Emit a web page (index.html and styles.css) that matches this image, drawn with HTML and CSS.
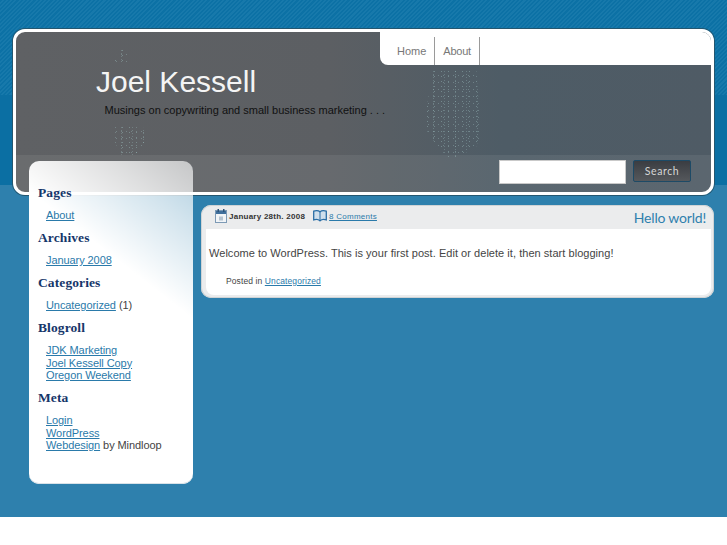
FILE: index.html
```html
<!DOCTYPE html>
<html lang="en">
<head>
<meta charset="utf-8">
<title>Joel Kessell</title>
<link rel="stylesheet" href="styles.css">
</head>
<body>
<div class="page">
  <header class="masthead">
    <div class="masthead-main">
      <nav class="tabs">
        <a href="#">Home</a>
        <a href="#">About</a>
      </nav>
      <h1 class="site-title">Joel Kessell</h1>
      <p class="tagline">Musings on copywriting and small business marketing . . .</p>
      <div class="speckle speckle-right" aria-hidden="true"></div>
      <div class="speckle speckle-top" aria-hidden="true"></div>
      <div class="speckle speckle-low" aria-hidden="true"></div>
    </div>
    <form class="search">
      <input class="search-input" type="text">
      <button class="search-btn" type="button">Search</button>
    </form>
  </header>
  <div class="columns">
    <aside class="sidebar">
      <h2>Pages</h2>
      <ul><li><a href="#">About</a></li></ul>
      <h2>Archives</h2>
      <ul><li><a href="#">January 2008</a></li></ul>
      <h2>Categories</h2>
      <ul><li><a href="#">Uncategorized</a> (1)</li></ul>
      <h2>Blogroll</h2>
      <ul>
        <li><a href="#">JDK Marketing</a></li>
        <li><a href="#">Joel Kessell Copy</a></li>
        <li><a href="#">Oregon Weekend</a></li>
      </ul>
      <h2>Meta</h2>
      <ul>
        <li><a href="#">Login</a></li>
        <li><a href="#">WordPress</a></li>
        <li><a href="#">Webdesign</a> by Mindloop</li>
      </ul>
    </aside>
    <main class="post">
      <div class="post-head">
        <svg class="icon" viewBox="0 0 13 14" width="13" height="14"><rect x="0.5" y="1.500" width="11" height="12" fill="#f1f4f7" stroke="#7d9ab5"/><rect x="1" y="2" width="10" height="3" fill="#3f6f9c"/><rect x="2.500" y="0" width="1.500" height="3" fill="#2b5279"/><rect x="8" y="0" width="1.500" height="3" fill="#2b5279"/><rect x="4" y="7.500" width="4" height="4" fill="#b4c3d1"/></svg>
        <span class="post-date">January 28th. 2008</span>
        <svg class="icon book" viewBox="0 0 14 12" width="14" height="12"><path d="M0.700 1.200C3 .4 5.500 .6 7 1.800c1.500-1.200 4-1.400 6.300-.6v8.600C11 9 8.500 9.300 7 10.800 5.500 9.300 3 9 .7 9.800z" fill="#cfdfec" stroke="#2a6ea6" stroke-width="1.300"/><path d="M7 2v8.500" stroke="#2a6ea6"/></svg>
        <a class="post-comments" href="#">8 Comments</a>
        <h2 class="post-title">Hello world!</h2>
      </div>
      <div class="post-body">
        <p>Welcome to WordPress. This is your first post. Edit or delete it, then start blogging!</p>
        <p class="post-cat">Posted in <a href="#">Uncategorized</a></p>
      </div>
    </main>
  </div>
</div>
</body>
</html>
```
FILE: styles.css
```css
* { box-sizing: border-box; }
html, body { margin: 0; padding: 0; background: #fff; }
body { font-family: "Liberation Sans", Arial, sans-serif; font-size: 11px; color: #444; }

.page {
  height: 517px;
  padding: 29px 13px 0;
  background-color: #2e80ad;
  background-image:
    repeating-linear-gradient(135deg, #0c71a5 0 1.500px, #1779ab 1.500px 3px),
    linear-gradient(#0b6fa3, #0b6fa3);
  background-size: 100% 95px, 100% 185px;
  background-repeat: no-repeat;
}

.masthead {
  position: relative;
  height: 166px;
  border: 3px solid #fff;
  border-radius: 12px;
  background: linear-gradient(90deg, #5f6164 0, #5c5f63 45%, #4e5c66 70%, #4f5b65 100%);
  box-shadow: 0 0 0 1px #24566f;
  overflow: hidden;
}

.masthead-main { position: relative; height: 123px; }

.tabs {
  float: right;
  display: flex;
  width: 331px;
  height: 33px;
  padding: 5px 0 0 7px;
  background: #fff;
  border-bottom-left-radius: 8px;
}
.tabs a {
  display: block;
  height: 28px;
  padding: 8px 8px 0 8px;
  border-right: 1px solid #9a9a9a;
  font-size: 11px;
  line-height: 13px;
  color: #777;
  text-decoration: none;
}
.tabs a:first-child { padding-left: 10px; }
.tabs a:last-child { letter-spacing: -.25px; }

.site-title {
  margin: 0;
  padding: 31px 0 0 80px;
  font-size: 30px;
  line-height: 37px;
  font-weight: normal;
  color: #f4f4f4;
}
.tagline {
  margin: 0;
  padding: 3px 0 0 88.500px;
  font-size: 11px;
  line-height: 14px;
  color: #111;
}

.speckle {
  position: absolute;
  background-image:
    radial-gradient(circle, rgba(160,195,195,.42) 0 .55px, transparent .9px),
    radial-gradient(circle, rgba(160,195,195,.36) 0 .55px, transparent .9px),
    radial-gradient(circle, rgba(160,195,195,.3) 0 .55px, transparent .9px);
  background-size: 7px 5px, 5px 7px, 11px 3px;
  background-position: 0 0, 2px 3px, 4px 1px;
}
.speckle-right {
  left: 408px;
  top: 37px;
  width: 58px;
  height: 88px;
  clip-path: polygon(12% 0, 90% 0, 95% 45%, 100% 70%, 90% 88%, 60% 100%, 40% 100%, 20% 85%, 0 65%, 8% 30%);
}
.speckle-top {
  left: 96px;
  top: 16px;
  width: 16px;
  height: 14px;
  clip-path: polygon(60% 0, 100% 0, 100% 100%, 0 100%);
}
.speckle-low {
  left: 96px;
  top: 93px;
  width: 32px;
  height: 30px;
  clip-path: polygon(10% 0, 100% 10%, 100% 60%, 80% 100%, 30% 100%, 10% 60%);
}

.search {
  display: flex;
  align-items: center;
  height: 37px;
  padding: 0 20px 3px 483px;
  background: rgba(255,255,255,.07);
}
.search-input {
  width: 127px;
  height: 24px;
  padding: 0;
  border: 1px solid #c9c9c9;
  background: #fff;
}
.search-btn {
  width: 58px;
  height: 22px;
  margin: -2px 0 0 7px;
  padding: 0 0 1px;
  border: 1px solid #1d4a66;
  border-radius: 2px;
  background: linear-gradient(#3a3d42, #55585c);
  font-family: "Lato", sans-serif;
  font-size: 10.500px;
  letter-spacing: .6px;
  color: #d6d6d6;
}

.columns {
  display: flex;
  align-items: flex-start;
  gap: 8px;
  padding-left: 16px;
}

.sidebar {
  width: 164px;
  height: 323px;
  margin-top: -34px;
  padding: 23px 0 0 9px;
  position: relative;
  border-radius: 10px;
  background: linear-gradient(218deg, rgba(255,255,255,.62) 0, rgba(255,255,255,.78) 14%, #fff 35%);
  box-shadow: inset 0 -1px 0 #d9e2e8;
}
.sidebar h2 {
  margin: 0;
  font-family: "Liberation Serif", "Times New Roman", serif;
  font-size: 13.500px;
  line-height: 17px;
  font-weight: bold;
  letter-spacing: .1px;
  color: #16366a;
}
.sidebar ul {
  list-style: none;
  margin: 0;
  padding: 8px 0 7.500px 8px;
}
.sidebar li { line-height: 12.500px; font-size: 11px; letter-spacing: -.08px; }
.sidebar a, .post a { color: #2a7aaa; }

.post {
  width: 513px;
  height: 93px;
  margin-top: 10px;
  padding: 3px;
  border-radius: 10px;
  background: #ebeced;
  box-shadow: inset 0 0 0 1px #cfd3d5;
}
.post-head {
  display: flex;
  align-items: center;
  height: 21px;
  padding: 0 5px 0 11px;
  font-size: 8px;
}
.icon { flex: none; margin-top: -5px; }
.post-date {
  margin: -5px 0 0 1px;
  font-weight: bold;
  letter-spacing: .25px;
  color: #333;
}
.book { margin-left: 8px; }
.post-comments { margin: -5px 0 0 2px; letter-spacing: .25px; }
.post-title {
  margin: -2px 0 0 auto;
  font-family: "Lato", sans-serif;
  font-size: 14px;
  line-height: 21px;
  letter-spacing: -.2px;
  font-weight: normal;
  color: #2f80ad;
}
.post-body {
  height: 66px;
  margin: 0 0 0 2px;
  padding: 17px 5px 0 3px;
  background: #fff;
  border-radius: 0 0 8px 8px;
}
.post-body p { margin: 0; font-size: 11px; line-height: 14px; letter-spacing: .04px; }
.post-body .post-cat {
  margin-top: 16px;
  padding-left: 17px;
  font-size: 8.500px;
  line-height: 11px;
  letter-spacing: .1px;
}
```
